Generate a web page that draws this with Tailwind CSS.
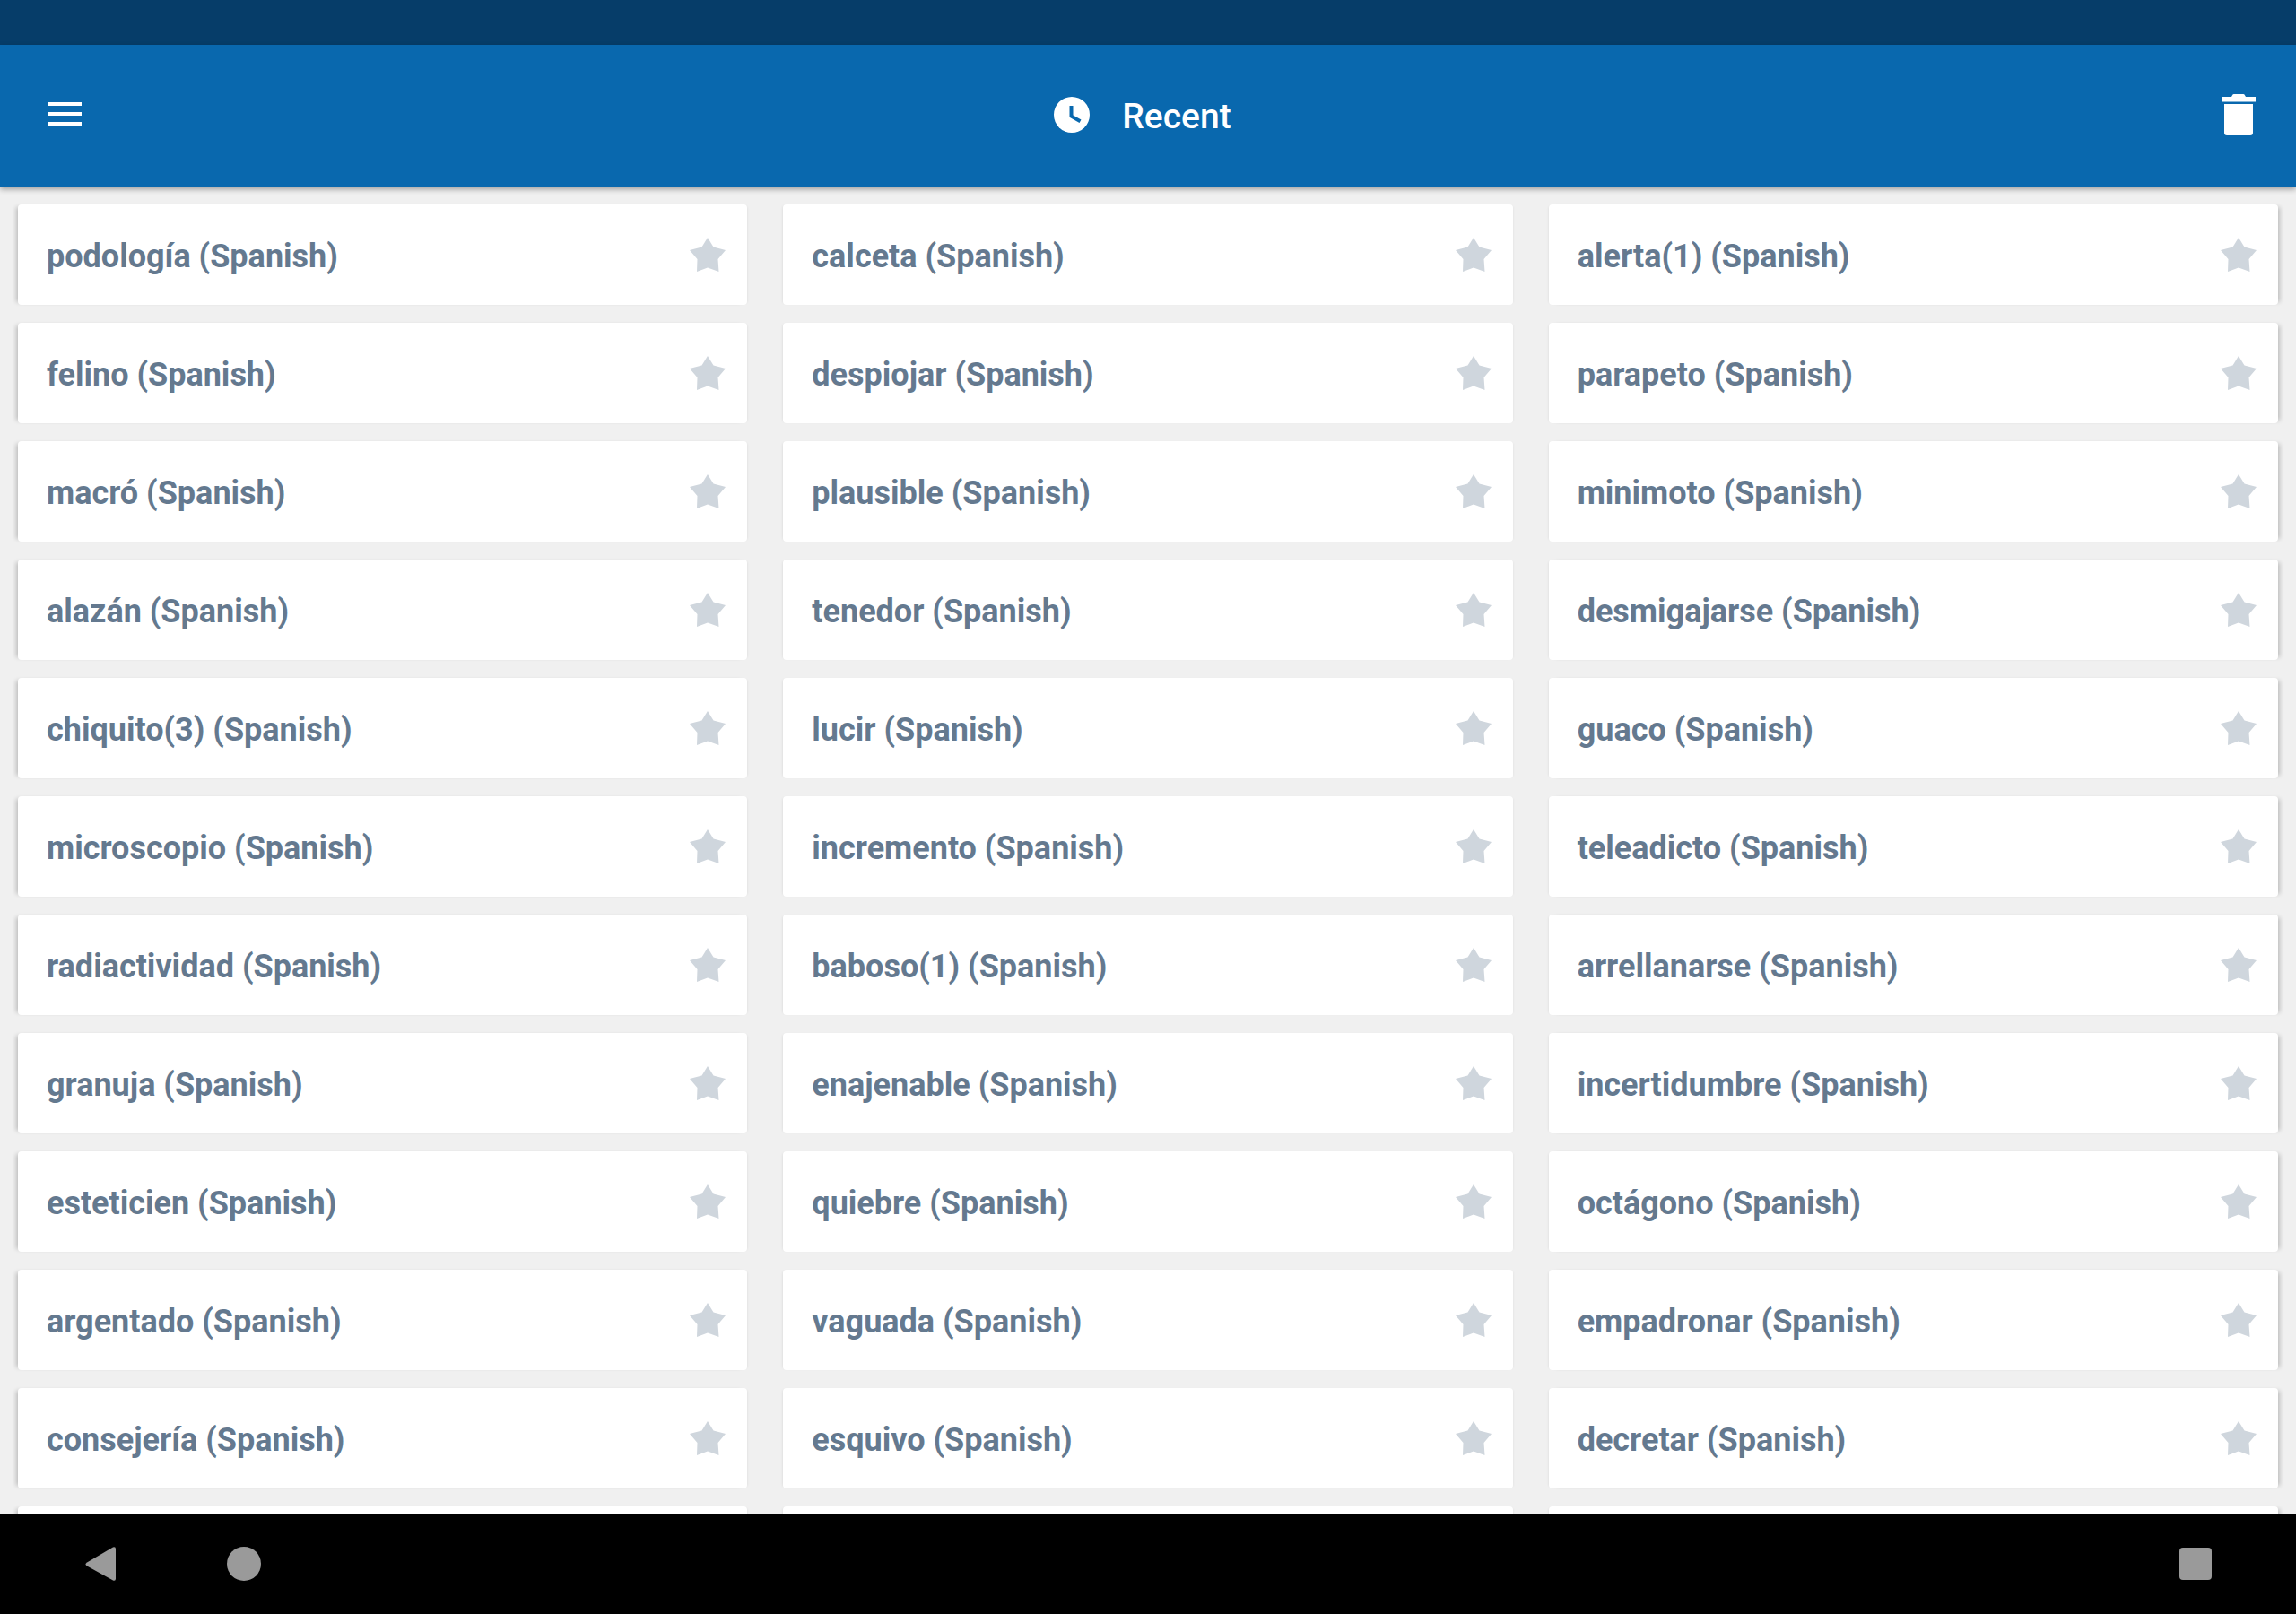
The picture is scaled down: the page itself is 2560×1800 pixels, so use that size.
<!DOCTYPE html>
<html>
<head>
    <meta charset="utf-8">
    <title>Recent</title>
    <script src="https://cdn.jsdelivr.net/npm/@tailwindcss/browser@4"></script>
</head>
<body class="bg-[#f0f0f0] font-['Roboto',sans-serif]">
    <div class="flex flex-col w-[2560px] h-[1800px] overflow-hidden">
        <div class="h-[50px] shrink-0 bg-[#063d69]"></div>

        <!-- Toolbar -->
        <header class="relative z-10 flex items-center justify-between h-[158px] shrink-0 pl-[53px] pr-[45px] bg-[#0968ae] shadow-[0_3px_6px_rgba(0,0,0,0.35)]">
            <div class="flex flex-col gap-[7px] w-[38px] -mt-[4px]">
                <div class="h-[4px] bg-white"></div>
                <div class="h-[4px] bg-white"></div>
                <div class="h-[4px] bg-white"></div>
            </div>
            <div class="flex items-center gap-[36px] -ml-[20px] -mt-[2px]">
                <svg class="w-[40px] h-[40px]" viewBox="0 0 40 40">
                    <circle cx="20" cy="20" r="20" fill="white"></circle>
                    <path d="M17.500 10h4v10.500l9 5-2 3.500-11-6.200z" fill="#0968ae"></path>
                </svg>
                <span class="text-[39px] leading-none font-medium text-white mt-[5px]">Recent</span>
            </div>
            <svg class="w-[38px] h-[48px] -mt-[4px]" viewBox="0 0 38 48">
                <path d="M11 5l1.500-2.500q.5-.5 1-.5h11q.5 0 1 .5l1.500 2.500h11v5.500h-38v-5.500z" fill="white"></path>
                <path d="M3 13h32v32q0 3-3 3h-26q-3 0-3-3z" fill="white"></path>
            </svg>
        </header>

        <!-- Word list -->
        <main id="list" class="grid grid-cols-3 gap-x-10 gap-y-5 flex-1 min-h-0 overflow-hidden px-5 pt-5 content-start"></main>

        <!-- Android nav bar -->
        <nav class="flex items-center h-[112px] shrink-0 pl-[95px] pr-[94px] bg-black">
            <svg class="w-[34px] h-[38px]" viewBox="0 0 34 38">
                <path d="M31 .500q3-1 3 2v33q0 3-3 2l-29-16q-3-2 0-4z" fill="#9a9a9a"></path>
            </svg>
            <div class="w-[38px] h-[38px] ml-[124px] rounded-full bg-[#9a9a9a]"></div>
            <div class="w-[36px] h-[36px] ml-auto rounded-[4px] bg-[#9a9a9a]"></div>
        </nav>
    </div>

    <script>
        const words = [
            "podología", "calceta", "alerta(1)",
            "felino", "despiojar", "parapeto",
            "macró", "plausible", "minimoto",
            "alazán", "tenedor", "desmigajarse",
            "chiquito(3)", "lucir", "guaco",
            "microscopio", "incremento", "teleadicto",
            "radiactividad", "baboso(1)", "arrellanarse",
            "granuja", "enajenable", "incertidumbre",
            "esteticien", "quiebre", "octágono",
            "argentado", "vaguada", "empadronar",
            "consejería", "esquivo", "decretar",
        ];
        const shadows = [
            "shadow-[-5px_0_5px_-3px_rgba(0,0,0,0.22),2px_0_3px_-2px_rgba(0,0,0,0.1)]",
            "shadow-[-2px_0_3px_-2px_rgba(0,0,0,0.12),2px_0_3px_-2px_rgba(0,0,0,0.08)]",
            "shadow-[5px_0_5px_-3px_rgba(0,0,0,0.22),-2px_0_3px_-2px_rgba(0,0,0,0.1)]",
        ];
        const star = '<svg class="w-[40px] h-[38px]" viewBox="0 0 40 38"><polygon points="20,0 26.500,10.500 40,14 31.500,24 32.500,38 20,33.500 8,38 8.500,24 0,14 13.500,10.500" fill="#cfd6dd"></polygon></svg>';

        const list = document.getElementById("list");
        words.forEach((word, i) => {
            const card = document.createElement("div");
            card.className = "flex items-center justify-between h-[112px] pl-[32px] pr-[24px] bg-white rounded-[4px] " + shadows[i % 3];
            card.innerHTML = '<span class="text-[36px] leading-none font-bold text-[#64798f] mt-[3px]">' + word + ' (Spanish)</span>' + star;
            list.appendChild(card);
        });
        // the next row is cut off by the nav bar
        for (let i = 0; i < 3; i++) {
            const card = document.createElement("div");
            card.className = "h-[112px] bg-white rounded-[4px] " + shadows[i];
            list.appendChild(card);
        }
    </script>
</body>
</html>
